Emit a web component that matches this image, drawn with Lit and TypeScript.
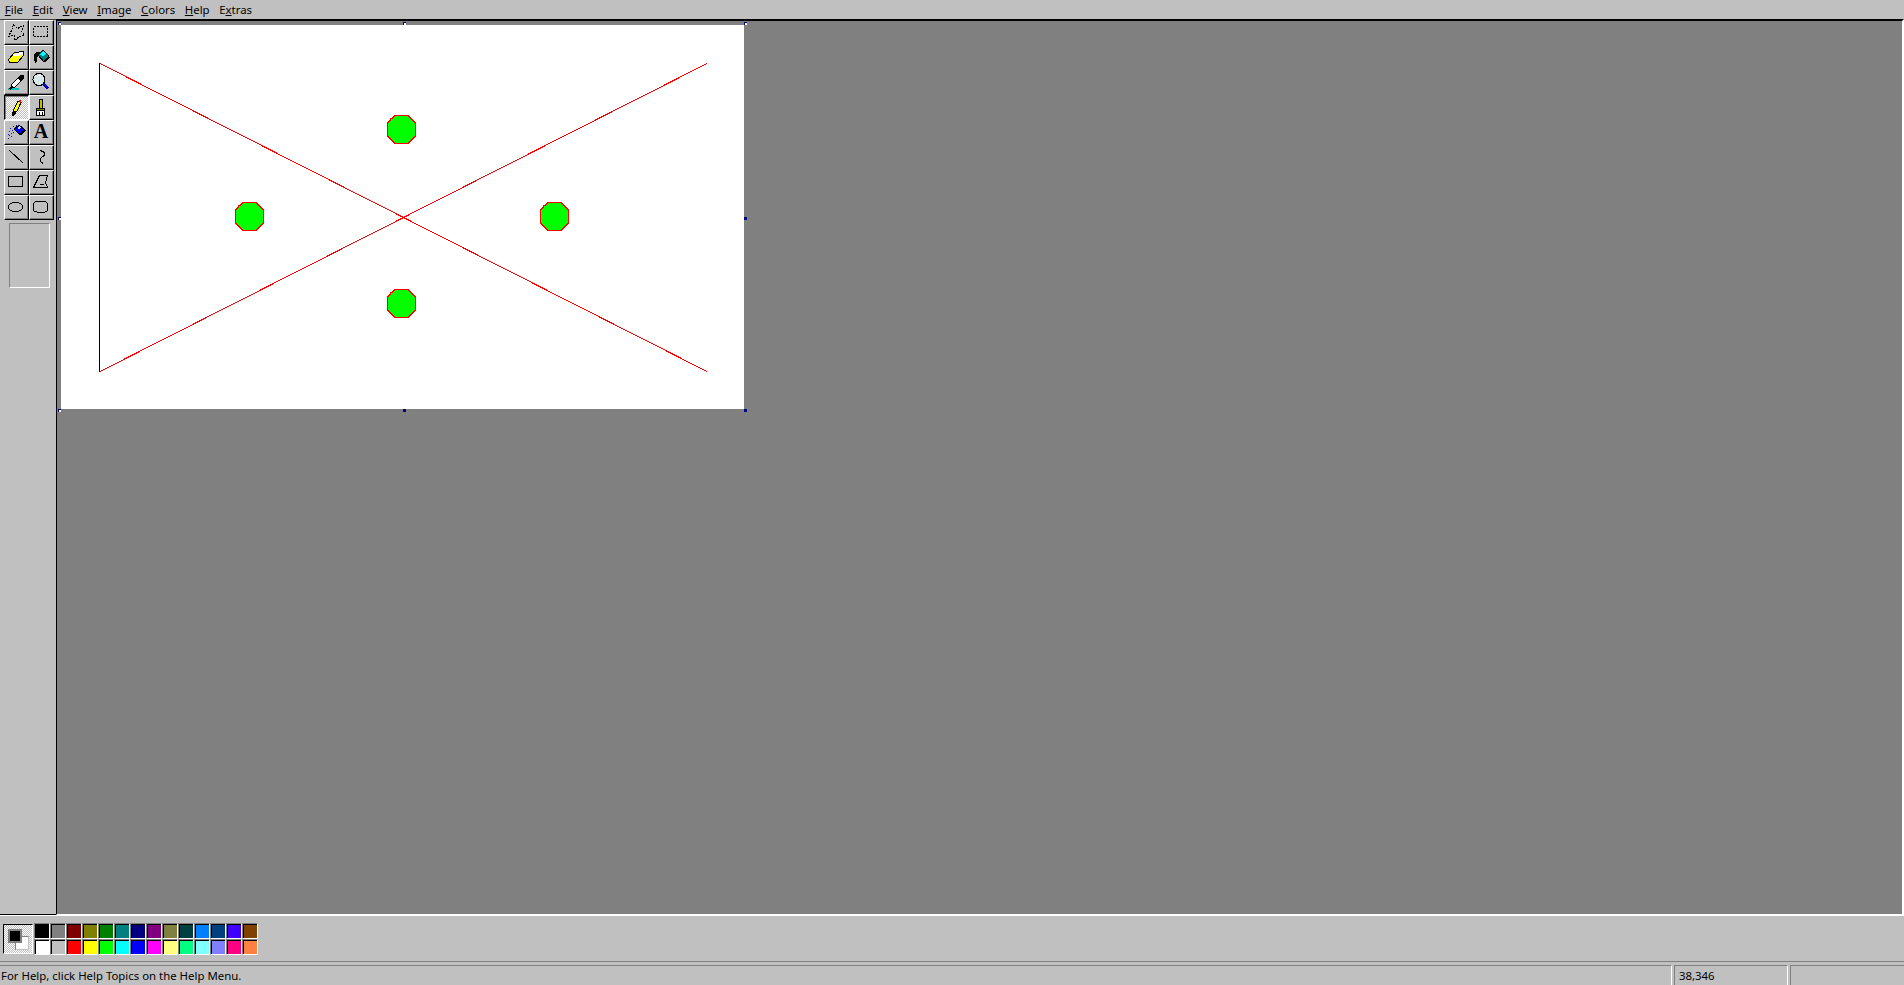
import { LitElement, html, css, svg } from "lit";
import { customElement } from "lit/decorators.js";

const TOP = ["#000000","#808080","#800000","#808000","#008000","#008080","#000080","#800080","#808040","#004040","#0080ff","#004080","#4000ff","#804000"];
const BOTTOM = ["#ffffff","#c0c0c0","#ff0000","#ffff00","#00ff00","#00ffff","#0000ff","#ff00ff","#ffff80","#00ff80","#80ffff","#8080ff","#ff0080","#ff8040"];
const BLOBS = [[387,115],[235,202],[540,202],[387,289]];
const BLOB = "8,0 20,0 24.5,3.5 28,8 28,20 24.5,24.5 20,28 8,28 3.5,24.5 0,20 0,8 3.5,3.5";

const ICONS = [
  svg`<polygon points="9.5,4.5 13.5,8.5 19.5,5.5 17.5,11.5 20.5,15.5 15.5,16.5 10.5,20.5 10.5,15.5 4.5,16.5 7.5,10.5" fill="none" stroke="#000" stroke-dasharray="2 1"/>`,
  svg`<rect x="4.5" y="6.5" width="14" height="10" fill="none" stroke="#000" stroke-dasharray="2 1"/>`,
  svg`<polygon points="4.5,14.5 10.5,7.5 19.5,6.5 19.5,10.5 13.5,17.5 5.5,17.5" fill="#ffff00" stroke="#000"/><polygon points="11,8 19,7 19,10 13,11 8,11" fill="#f8f8f8"/>`,
  svg`<path d="M9 6.5 C4 7 4 12 6 18 L8 17 L8 12 L12 8Z" fill="#000"/><polygon points="9,10 14,5 20,11 15,17" fill="#008080" stroke="#000"/><polygon points="11,10 14,6 17,9 14,11" fill="#00ffff"/><line x1="15" y1="17" x2="20" y2="12" stroke="#000" stroke-width="2"/>`,
  svg`<ellipse cx="9.5" cy="19" rx="6" ry="1.5" fill="#00c0c0"/><path d="M7 15 L14 8 L17 11 L10 18 Z" fill="#fff" stroke="#000"/><line x1="5.5" y1="19.5" x2="8" y2="17" stroke="#000" stroke-width="1.5"/><polygon points="14,8 17,4.5 20,5 20.5,7.5 17,11" fill="#000"/>`,
  svg`<circle cx="10" cy="9.5" r="6" fill="#d8e8e8" stroke="#000"/><path d="M8 7 Q10 5 12 6" fill="none" stroke="#fff"/><line x1="14.5" y1="14" x2="19" y2="18.5" stroke="#0000c0" stroke-width="2.4"/>`,
  svg`<polygon points="10,20 8.5,20 9.5,15 14,6 17,7.5 13,16" fill="#ffff00" stroke="#000"/><polygon points="14,6 15.5,4.5 17.5,6 16.5,8" fill="#f00"/><polygon points="8.5,20 10,15.5 13,16.5 11,20" fill="#000"/>`,
  svg`<rect x="10" y="4.5" width="3.5" height="9" fill="#c0c000" stroke="#000"/><rect x="7.5" y="13.5" width="8" height="2" fill="#808000" stroke="#000"/><rect x="7.5" y="15.5" width="8" height="5" fill="#fff" stroke="#000"/><path d="M10 17v3M13 17v3" stroke="#000"/>`,
  svg`<path d="M4 18h1M5 15h1M5 11h1M7 13h1M6 8h1M8 10h1M9 6h1M10 8h1M12 5h1M4 14h1M7 16h1M9 12h1" stroke="#0000ff"/><polygon points="10,9 15,5 21,10 16,15" fill="#0000ff" stroke="#000"/><polygon points="13,8 15,6 17,8 15,9" fill="#c0e0ff"/><line x1="16" y1="15" x2="21" y2="10" stroke="#000" stroke-width="2"/>`,
  null,
  svg`<line x1="5" y1="5" x2="19" y2="18" stroke="#000"/>`,
  svg`<path d="M11.5 5.5 L15.5 7.5 L15.5 10 L11 14 L11 16 L14 18.5" fill="none" stroke="#000"/>`,
  svg`<rect x="4.5" y="6.5" width="14" height="10" fill="none" stroke="#000"/>`,
  svg`<polygon points="10.5,5.5 18.5,5.5 16.5,12.5 18.5,17.5 4.5,17.5" fill="none" stroke="#000"/><polyline points="10.5,14 15,14" stroke="#000" fill="none"/>`,
  svg`<ellipse cx="11.5" cy="12" rx="7.5" ry="4.5" fill="none" stroke="#000"/>`,
  svg`<rect x="4.5" y="6.5" width="14" height="10.5" rx="3" fill="none" stroke="#000"/>`,
];

@customElement("app-root")
export class AppRoot extends LitElement {
  static styles = css`
    :host { display: block; width: 1904px; height: 985px; background: #c0c0c0; overflow: hidden;
      font-family: "Noto Sans", "Open Sans", sans-serif; font-size: 11.4px; color: #000; }
    .page { display: flex; flex-direction: column; height: 985px; }
    .menu { display: flex; height: 19px; align-items: center; box-sizing: border-box; flex: none; }
    .menu span { padding: 0 4.8px; line-height: 19px; }
    .body { display: flex; flex: none; height: 896px; }
    .tools { width: 56px; flex: none; box-sizing: border-box; padding: 0 0 0 4px; border-bottom: 1px solid #000; border-top: 1px solid #404040; }
    .grid { display: grid; grid-template-columns: repeat(2, 25px); grid-auto-rows: 25px; }
    .btn { box-sizing: border-box; width: 25px; height: 25px; border: 1px solid; border-color: #fff #000 #000 #fff;
      box-shadow: inset -1px -1px 0 #808080; position: relative; display: flex; align-items: center; justify-content: center; }
    .btn.down { border-color: #000 #fff #fff #000; box-shadow: inset 1px 1px 0 #808080;
      background: repeating-conic-gradient(#fff 0 25%, #c0c0c0 0 50%) 0 0 / 2px 2px; }
    .btn svg { position: absolute; left: -1px; top: -1px; width: 25px; height: 25px; shape-rendering: crispEdges; }
    .btn b { font: bold 20px/1 "Liberation Serif", serif; margin: 0 1px 3px 0; }
    .box { box-sizing: border-box; width: 41px; height: 65px; margin: 3px 0 0 5px; border: 1px solid; border-color: #808080 #fff #fff #808080; }
    .work { flex: 1; background: #808080; box-sizing: border-box; border-top: 2px solid #000; border-left: 1px solid #000;
      border-right: 2px solid #fff; border-bottom: 1px solid #fff; padding: 4px 0 0 4px; }
    .canvas { width: 683px; height: 384px; background: #fff; position: relative; }
    .canvas svg { display: block; width: 683px; height: 384px; shape-rendering: crispEdges; }
    .h { position: absolute; width: 3px; height: 3px; box-sizing: border-box; background: #000080; }
    .h.hollow { background: #fff; border-top: 1px solid #000080; border-left: 1px solid #000080; }
    .h.tl { left: -3px; top: -3px; } .h.tm { left: 342px; top: -3px; } .h.tr { left: 683px; top: -3px; }
    .h.ml { left: -3px; top: 192px; } .h.mr { left: 683px; top: 192px; }
    .h.bl { left: -3px; top: 384px; } .h.bm { left: 342px; top: 384px; } .h.br { left: 683px; top: 384px; }
    .colors { flex: none; display: flex; padding: 7px 0 0 3px; box-sizing: border-box; border-top: 1px solid #fff; border-bottom: 1px solid #808080; height: 47px; }
    .cur { box-sizing: border-box; width: 30px; height: 30px; margin: 1px 1px 0 0; position: relative; border: 1px solid; border-color: #000 #fff #fff #000;
      background: repeating-conic-gradient(#fff 0 25%, #c0c0c0 0 50%) 0 0 / 2px 2px; }
    .sw { position: absolute; box-sizing: border-box; width: 14px; height: 14px; }
    .sw.fg { left: 4px; top: 4px; background: #000; z-index: 1; border: 2px solid #808080; }
    .sw.bg { left: 11px; top: 11px; background: #fff; border: 1px solid; border-color: #808080 #c0c0c0 #c0c0c0 #808080; }
    .pal { display: grid; grid-template-columns: repeat(14, 16px); grid-auto-rows: 16px; }
    .cell { box-sizing: border-box; border: 1px solid; border-color: #808080 #fff #fff #808080; box-shadow: inset 1px 1px 0 #000; }
    .status { flex: 1; display: flex; padding-top: 3px; box-sizing: border-box; min-height: 0; }
    .st { box-sizing: border-box; border-top: 1px solid #808080; border-left: 1px solid #808080; border-right: 1px solid #fff; height: 30px; line-height: 19px; white-space: nowrap; }
    .st.a { width: 1672px; border-left: 0; padding-left: 1px; }
    .st.b { width: 114px; margin-left: 2px; padding-left: 4px; }
    .st.c { flex: 1; margin-left: 2px; border-right: 0; }
  `;

  render() {
    const handles = [
      ["tl", true], ["tm", true], ["tr", true], ["ml", true], ["mr", false], ["bl", true], ["bm", false], ["br", false],
    ] as const;
    return html`<div class="page">
      <div class="menu">
        <span><u>F</u>ile</span><span><u>E</u>dit</span><span><u>V</u>iew</span><span><u>I</u>mage</span><span><u>C</u>olors</span><span><u>H</u>elp</span><span>E<u>x</u>tras</span>
      </div>
      <div class="body">
        <div class="tools">
          <div class="grid">
            ${ICONS.map((ic, i) => html`<div class="btn ${i === 6 ? "down" : ""}">
              ${ic ? html`<svg viewBox="0 0 25 25">${ic}</svg>` : html`<b>A</b>`}
            </div>`)}
          </div>
          <div class="box"></div>
        </div>
        <div class="work">
          <div class="canvas">
            <svg viewBox="61 25 683 384">
              <line x1="99.5" y1="63" x2="99.5" y2="372" stroke="#000"/>
              <line x1="100" y1="63.5" x2="707" y2="371.5" stroke="#f00"/>
              <line x1="100" y1="371.5" x2="707" y2="63.5" stroke="#f00"/>
              ${BLOBS.map(([x, y]) => svg`<polygon transform="translate(${x + 0.5} ${y + 0.5})" points=${BLOB} fill="#00ff00" stroke="#f00" stroke-width="1.4"/>`)}
            </svg>
            ${handles.map(([p, hollow]) => html`<div class="h ${p} ${hollow ? "hollow" : ""}"></div>`)}
          </div>
        </div>
      </div>
      <div class="colors">
        <div class="cur"><div class="sw fg"></div><div class="sw bg"></div></div>
        <div class="pal">
          ${TOP.map((c) => html`<div class="cell" style="background:${c}"></div>`)}
          ${BOTTOM.map((c) => html`<div class="cell" style="background:${c}"></div>`)}
        </div>
      </div>
      <div class="status">
        <div class="st a">For Help, click Help Topics on the Help Menu.</div>
        <div class="st b">38,346</div>
        <div class="st c"></div>
      </div>
    </div>`;
  }
}
